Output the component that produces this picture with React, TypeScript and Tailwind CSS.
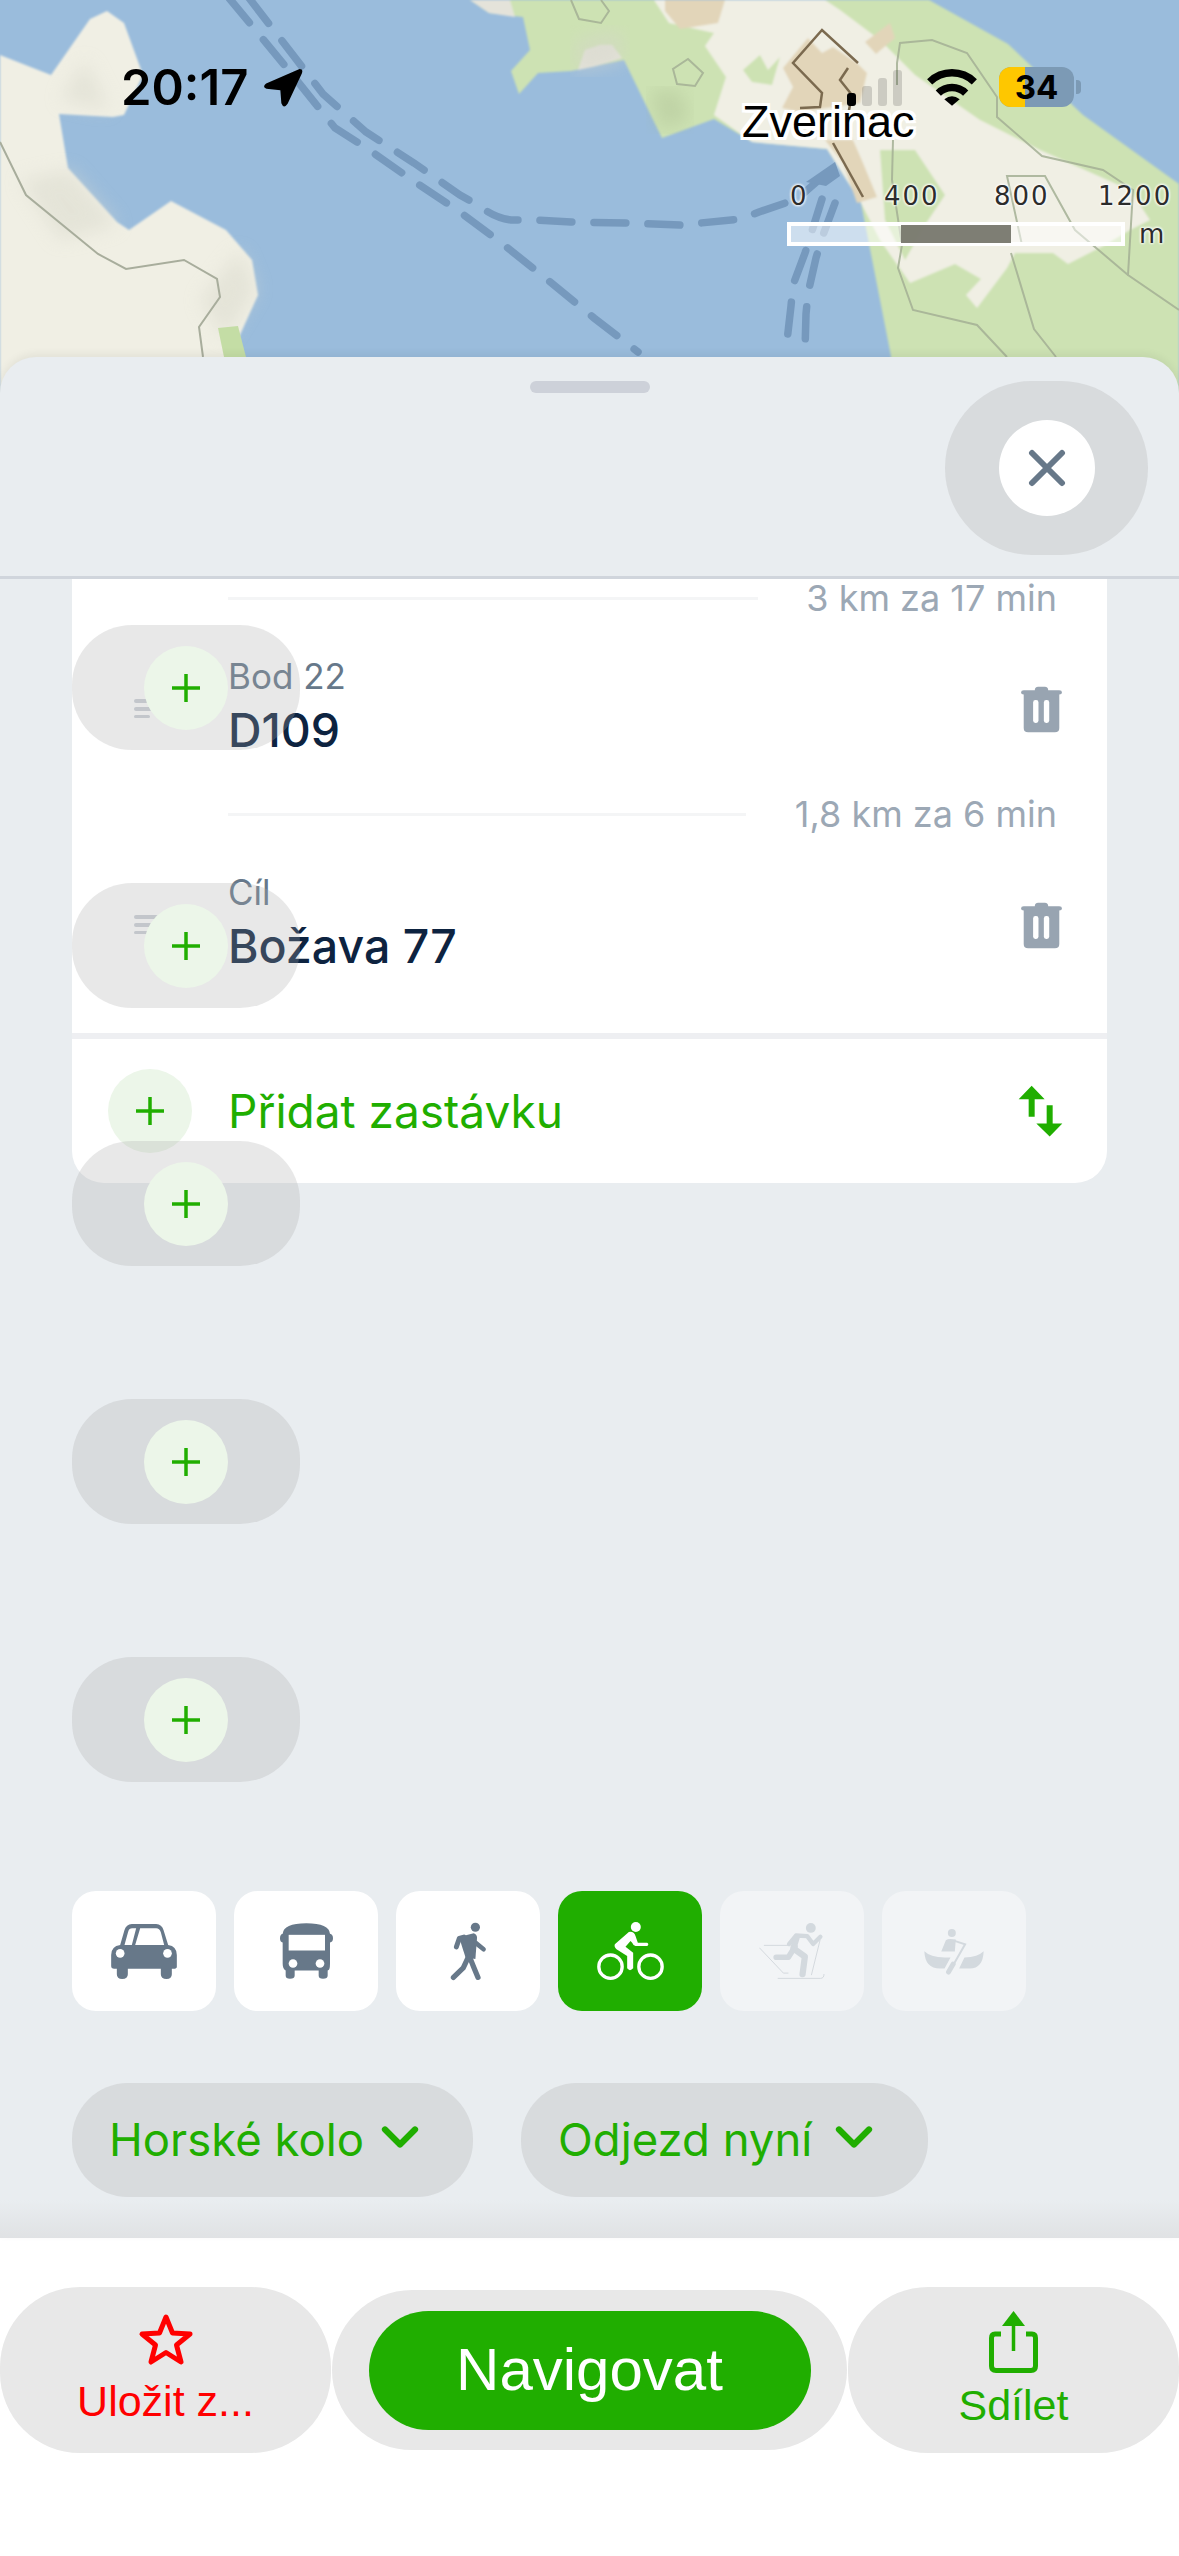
import { ChevronDown } from "lucide-react";

// ── Map background ────────────────────────────────────────────────────────────
function MapArt() {
  return (
    <svg width="1179" height="400" viewBox="0 0 1179 400" className="block">
      <defs>
        <filter id="soft">
          <feGaussianBlur stdDeviation="1" />
        </filter>
        <filter id="shade">
          <feGaussianBlur stdDeviation="9" />
        </filter>
      </defs>
      <rect width="1179" height="400" fill="#9abcdc" />

      {/* left island */}
      <g filter="url(#soft)">
        <path
          d="M0 55 L51 75 L90 19 L107 11 L124 23 L143 75 L124 115 L113 117 L59 114 L68 168 L117 222 L129 230 L171 201 L226 230 L252 260 L258 295 L239 337 L247 400 L0 400Z"
          fill="#f0efe4"
        />
      </g>
      <path d="M70 170 L118 225 L60 240 L20 180Z M225 340 L256 290 L240 250 L200 300Z M85 60 L110 110 L60 100Z" fill="#d9d9cc" filter="url(#shade)" opacity="0.5" />
      <path d="M218 328 L238 326 L246 357 L224 357Z" fill="#c4dda5" />
      <polyline points="0,142 26,195 98,254 126,269 184,260 217,279 220,297 199,327 203,357" fill="none" stroke="#a8ad9c" strokeWidth="2" />

      {/* right island */}
      <g filter="url(#soft)">
        <path
          d="M470 0 L489 13 L523 17 L530 50 L511 71 L519 94 L538 73 L571 71 L624 60 L662 138 L714 119 L752 142 L827 149 L861 203 L891 356 L891 400 L1179 400 L1179 184 L1083 115 L1008 44 L929 0Z"
          fill="#cde2b3"
        />
        <path d="M489 13 L470 0 L510 0 L515 17Z M578 70 L596 66 L622 58 L612 45 L600 45 L585 50Z" fill="#e4e3da" />
        <path
          d="M654 0 L669 23 L714 33 L705 46 L726 77 L714 115 L752 142 L827 149 L861 203 L880 240 L910 283 L955 264 L981 279 L966 295 L977 308 L1007 268 L1015 253 L1053 253 L1068 264 L1105 245 L1130 230 L1150 220 L1130 190 L1040 150 L980 120 L915 75 L880 40 L840 10 L825 0Z"
          fill="#f0efe4"
        />
        <path d="M743 70 L760 55 L768 70 L780 57 L772 85 L752 82Z M880 150 L915 150 L945 195 L925 225 L905 260 L885 220Z" fill="#cde2b3" />
        <path d="M808 38 L783 68 L793 87 L782 108 L800 112 L860 103 L867 73 L857 63 L833 47 L822 53Z M825 140 L843 163 L857 203 L877 197 L863 163 L853 140Z M665 0 L725 0 L718 23 L680 29 L665 11Z M890 23 L865 42 L876 54 L895 38Z" fill="#e2d5b9" />
      </g>
      <path d="M660 130 L690 120 L680 90 L650 90Z" fill="#a6b78c" filter="url(#shade)" opacity="0.35" />
      <path d="M625 60 L575 72 L575 40 L620 30Z" fill="#d5d5ca" filter="url(#shade)" opacity="0.5" />

      {/* contours */}
      <g fill="none" stroke="#a4b095" strokeWidth="2" opacity="0.85">
        <polyline points="897,85 897,63 900,43 932,40 967,53 997,97 997,117 1042,156 1103,170 1133,190 1128,275 1179,310" />
        <polyline points="893,140 892,180 902,245 898,268 913,310 977,325 1007,357" />
        <polyline points="1011,253 1034,329 1056,357" />
        <polyline points="1022,245 1007,176 1045,176 1075,230 1128,275" />
        <polygon points="688,59 703,73 695,86 677,84 673,69" />
        <polyline points="571,0 579,19 601,23 609,11 601,0" />
      </g>

      {/* roads */}
      <g fill="none" stroke="#7b6a4f" strokeWidth="2.5">
        <polyline points="858,63 822,30 793,63 822,93 820,107 800,108" />
        <polyline points="848,68 840,80 852,95 848,115" />
        <polyline points="833,143 863,197" />
      </g>

      {/* ferry lines */}
      <g fill="none" stroke="#7699bd" strokeWidth="7.5" strokeLinecap="round" strokeDasharray="32 22">
        <path d="M229 -2 L286 67 L335 128 L365 147 L412 180 L460 212 L504 245 L549 281 L594 318 L638 352" />
        <path d="M249 -2 L323 94 L366 132 L414 163 L460 195 L481 207 Q495 218 511 220 L534 220 L571 222 L628 223 L680 225 L741 219 L759 212 L797 199 L828 172" />
        <path d="M822 199 L805 253 L793 285 L791 306 L787 341" />
        <path d="M835 203 L823 235 L816 258 L808 293 L806 314 L805 350" />
      </g>
      <path d="M806 182 L835 162 L840 176 L826 186Z" fill="#7699bd" />

      {/* scale bar */}
      <rect x="789" y="224" width="334" height="20" fill="#ffffff" fillOpacity="0.5" stroke="#ffffff" strokeWidth="4" />
      <rect x="901" y="225" width="110" height="18" fill="#77776d" fillOpacity="0.95" />
    </svg>
  );
}

function ScaleLabel({ className, children }: { className: string; children: string }) {
  return (
    <span className={`absolute font-['DejaVu_Sans',sans-serif] text-[26px] tracking-[2px] leading-none text-[#2c2c2c] [text-shadow:0_0_3px_#fff,0_0_3px_#fff,0_0_3px_#fff] ${className}`}>
      {children}
    </span>
  );
}

// ── Status bar icons ──────────────────────────────────────────────────────────
function LocationArrow() {
  return (
    <svg width="40" height="39" viewBox="488 55 120 118" className="absolute left-[263px] top-[68px]">
      <path d="M598 58 Q610 58 605 72 L562 163 Q550 180 543 162 L540 122 L498 118 Q484 112 497 102Z" fill="#000" />
    </svg>
  );
}

function Wifi() {
  return (
    <svg width="50" height="37" viewBox="680 118 150 110" className="absolute left-[927px] top-[69px]">
      <g fill="none" stroke="#000" strokeWidth="22">
        <path d="M688 156 A 96 96 0 0 1 822 156" />
        <path d="M714 190 A 58 58 0 0 1 796 190" />
      </g>
      <path d="M732 208 Q755 190 778 208 L755 228Z" fill="#000" />
    </svg>
  );
}

function SignalBars() {
  return (
    <div className="absolute left-[847px] top-[69px] h-[37px] flex items-end gap-[6px]">
      <div className="w-[9px] h-[13px] rounded-[3px] bg-black" />
      <div className="w-[10px] h-[20px] rounded-[3px] bg-black/15" />
      <div className="w-[9px] h-[28px] rounded-[3px] bg-black/15" />
      <div className="w-[9px] h-[36px] rounded-[3px] bg-black/15" />
    </div>
  );
}

function Battery() {
  return (
    <div className="absolute left-[999px] top-[67px] flex items-center">
      <div className="w-[75px] h-[40px] rounded-[12px] overflow-hidden bg-[#7c9ab5] flex relative">
        <div className="w-[26px] bg-[#fec700]" />
        <span className="absolute inset-0 flex items-center justify-center font-bold text-[33px] leading-none text-black">34</span>
      </div>
      <div className="w-[5px] h-[14px] ml-[2px] rounded-r-[4px] bg-[#7c9ab5]" />
    </div>
  );
}

// ── Route card pieces ─────────────────────────────────────────────────────────
function PlusIcon() {
  return (
    <svg width="28" height="28" viewBox="0 0 28 28">
      <path d="M14 0 V28 M0 14 H28" stroke="#20ae00" strokeWidth="3.5" />
    </svg>
  );
}

function PlusCircle() {
  return (
    <div className="w-[84px] h-[84px] rounded-full bg-[#ecf6e9] flex items-center justify-center">
      <PlusIcon />
    </div>
  );
}

function TrashIcon() {
  return (
    <svg width="43" height="47" viewBox="62 45 126 140">
      <path
        d="M105 58 Q105 47 115 47 H135 Q145 47 145 58 H178 Q186 58 186 64 Q186 70 178 70 V170 Q178 183 165 183 H85 Q72 183 72 170 V70 Q64 70 64 64 Q64 58 72 58Z"
        fill="#98a4b1"
      />
      <rect x="100" y="87" width="16" height="68" rx="7" fill="#fff" />
      <rect x="132" y="87" width="16" height="68" rx="7" fill="#fff" />
    </svg>
  );
}

function SwapIcon() {
  return (
    <svg width="45" height="52" viewBox="55 30 135 155">
      <path d="M96 32 L135 72 H105 V125 H87 V72 H57Z M141 90 H159 V145 H188 L150 184 L110 145 H141Z" fill="#20ae00" />
    </svg>
  );
}

function Leg({ text, lineWidth }: { text: string; lineWidth: string }) {
  return (
    <div className="h-[38px] flex items-center justify-between pl-[156px] pr-[50px]">
      <div className={`h-[3px] bg-[#f4f5f6] ${lineWidth}`} />
      <span className="text-[36px] leading-none text-[#9ca8b5]">{text}</span>
    </div>
  );
}

function Stop({ label, name }: { label: string; name: string }) {
  return (
    <div className="h-[178px] flex items-start pl-[62px] pr-[44px]">
      <div className="w-[24px] mt-[82px] mr-[70px] flex flex-col gap-[4px]">
        <div className="h-[4px] w-[24px] rounded-full bg-[#ccd1d8]" />
        <div className="h-[4px] w-[24px] rounded-full bg-[#ccd1d8]" />
        <div className="h-[3px] w-[16px] rounded-full bg-[#ccd1d8]" />
      </div>
      <div className="flex-1 pt-[39px]">
        <div className="text-[35px] leading-[40px] text-[#66788a]">{label}</div>
        <div className="mt-[6px] text-[46.5px] leading-[56px] font-medium text-[#0d2340]">{name}</div>
      </div>
      <div className="mt-[69px]">
        <TrashIcon />
      </div>
    </div>
  );
}

function GhostAdd() {
  return (
    <div className="w-[228px] h-[125px] rounded-[60px] bg-[rgba(170,170,170,0.27)] flex items-center justify-center">
      <PlusCircle />
    </div>
  );
}

// ── Transport mode icons ──────────────────────────────────────────────────────
function CarIcon() {
  return (
    <svg width="66" height="55" viewBox="63 57 197 165">
      <path d="M90 120 L103 75 Q108 58 125 57 H198 Q215 58 220 75 L234 120 Q260 124 260 150 V185 Q260 191 250 191 H245 V208 Q245 222 229 222 Q212 222 212 208 V191 H113 V208 Q113 222 96 222 Q80 222 80 208 V191 H72 Q63 191 63 183 V150 Q63 124 90 120Z" fill="#677889" />
      <path d="M103 120 L114 80 Q117 70 126 70 H138 L125 120Z M135 120 L150 70 H198 Q208 70 212 82 L222 120Z" fill="#fff" />
      <circle cx="90" cy="145" r="13" fill="#fff" />
      <circle cx="232" cy="145" r="13" fill="#fff" />
    </svg>
  );
}

function BusIcon() {
  return (
    <svg width="53" height="56" viewBox="568 48 159 167">
      <path d="M576 80 Q578 48 647 48 Q716 48 718 80 Q727 82 727 93 Q727 104 718 106 V170 Q718 190 711 190 V205 Q711 215 697 215 Q684 215 684 205 V190 H612 V205 Q612 215 598 215 Q585 215 585 205 V190 Q576 185 576 170 V106 Q568 104 568 93 Q568 82 576 80Z" fill="#677889" />
      <rect x="594" y="83" width="109" height="47" fill="#fff" />
      <circle cx="607" cy="169" r="13" fill="#fff" />
      <circle cx="688" cy="169" r="13" fill="#fff" />
    </svg>
  );
}

function WalkIcon() {
  return (
    <svg width="37" height="59" viewBox="1078 42 112 180">
      <circle cx="1155" cy="58" r="14" fill="#677889" />
      <path d="M1105 88 L1150 76 Q1160 80 1160 90 L1155 155 L1125 150 Z" fill="#677889" />
      <g fill="none" stroke="#677889" strokeLinecap="round" strokeLinejoin="round">
        <path d="M1120 88 L1106 92 L1097 118" strokeWidth="15" />
        <path d="M1155 105 L1180 125" strokeWidth="14" />
        <path d="M1133 150 L1118 182 L1088 211" strokeWidth="16" />
        <path d="M1138 150 L1150 180 L1163 211" strokeWidth="16" />
      </g>
    </svg>
  );
}

function BikeIcon() {
  return (
    <svg width="67" height="58" viewBox="50 48 200 174">
      <circle cx="166" cy="63" r="15" fill="#fff" />
      <circle cx="90" cy="182" r="35" fill="none" stroke="#fff" strokeWidth="10" />
      <circle cx="210" cy="182" r="35" fill="none" stroke="#fff" strokeWidth="10" />
      <path d="M103 115 L145 78 Q160 75 165 90 L172 110 H200 Q207 114 200 120 H165 Q158 118 155 110 L150 105 L135 122 L158 140 V187 Q148 198 140 187 V150 L108 130 Q100 122 103 115Z" fill="#fff" />
    </svg>
  );
}

function SkiIcon() {
  return (
    <svg width="66" height="58" viewBox="536 46 200 174">
      <circle cx="693" cy="63" r="15" fill="#d3d9de" />
      <g fill="none" stroke="#d3d9de" strokeLinecap="round" strokeLinejoin="round">
        <path d="M627 112 L648 86 L682 88 L700 112 L722 90" strokeWidth="13" />
        <path d="M650 92 L640 125 L675 150 L668 203" strokeWidth="19" />
        <path d="M645 120 L625 152 L588 152" strokeWidth="17" />
        <path d="M721 100 L695 205" strokeWidth="3" />
        <path d="M538 124 L610 200 H624" strokeWidth="3" />
        <path d="M552 116 H625" strokeWidth="3" />
        <path d="M594 216 H722 Q733 216 733 204" strokeWidth="3" />
      </g>
    </svg>
  );
}

function CanoeIcon() {
  return (
    <svg width="60" height="47" viewBox="1032 64 181 140">
      <circle cx="1116" cy="78" r="12" fill="#d3d9de" />
      <path d="M1033 133 Q1050 150 1095 152 H1112 L1094 185 H1080 Q1035 185 1033 133Z M1212 133 Q1210 185 1170 185 H1138 L1154 152 Q1195 150 1212 133Z" fill="#d3d9de" />
      <path d="M1084 134 L1098 100 Q1105 94 1128 98 L1125 134Z" fill="#d3d9de" />
      <g fill="none" stroke="#d3d9de" strokeLinecap="round">
        <path d="M1124 102 L1156 112 L1122 172" strokeWidth="6" />
        <path d="M1120 172 L1106 196" strokeWidth="15" />
      </g>
    </svg>
  );
}

function ModeButton({ active, disabled, children }: { active?: boolean; disabled?: boolean; children: React.ReactNode }) {
  const bg = active ? "bg-[#20ae00]" : disabled ? "bg-[#f2f4f6]" : "bg-white";
  return <div className={`w-[144px] h-[120px] rounded-[24px] flex items-center justify-center ${bg}`}>{children}</div>;
}

function Dropdown({ label, width, gap }: { label: string; width: string; gap: string }) {
  return (
    <div className={`h-[114px] rounded-[56px] bg-[rgba(170,170,170,0.27)] flex items-center pl-[37px] ${width}`}>
      <span className="text-[45.5px] leading-none text-[#20ae00]">{label}</span>
      <ChevronDown size={60} strokeWidth={2.5} className={`text-[#20ae00] -mt-[6px] ${gap}`} />
    </div>
  );
}

// ── Footer icons ──────────────────────────────────────────────────────────────
function StarIcon() {
  return (
    <svg width="56" height="54" viewBox="0 0 56 54">
      <path d="M28 4 L34.5 20 L52 21 L38.5 32 L43 49 L28 39.5 L13 49 L17.5 32 L4 21 L21.5 20Z" fill="none" stroke="#ff0000" strokeWidth="5" strokeLinejoin="round" />
    </svg>
  );
}

function ShareIcon() {
  return (
    <svg width="49" height="62" viewBox="0 0 49 62">
      <path d="M24.5 0 L36 15 H13Z" fill="#20ae00" />
      <path d="M24.5 12 V40" stroke="#20ae00" strokeWidth="3.5" />
      <path d="M12 23 H6 Q2.5 23 2.5 27 V55 Q2.5 59.5 7 59.5 H42 Q46.5 59.5 46.5 55 V27 Q46.5 23 43 23 H37" fill="none" stroke="#20ae00" strokeWidth="5" />
    </svg>
  );
}

export default function App() {
  return (
    <div className="relative w-[1179px] h-[2556px] overflow-hidden bg-white font-[Inter,sans-serif]">
      {/* Map */}
      <div className="relative h-[400px]">
        <MapArt />
        <span className="absolute left-[742px] top-[97px] font-['Liberation_Sans',sans-serif] text-[45px] leading-[50px] text-black [text-shadow:3px_0_0_#fff,-3px_0_0_#fff,0_3px_0_#fff,0_-3px_0_#fff,3px_3px_0_#fff,-3px_3px_0_#fff,3px_-3px_0_#fff,-3px_-3px_0_#fff]">
          Zverinac
        </span>
        <ScaleLabel className="left-[790px] top-[183px]">0</ScaleLabel>
        <ScaleLabel className="left-[884px] top-[183px]">400</ScaleLabel>
        <ScaleLabel className="left-[994px] top-[183px]">800</ScaleLabel>
        <ScaleLabel className="left-[1098px] top-[183px]">1200</ScaleLabel>
        <ScaleLabel className="left-[1139px] top-[221px]">m</ScaleLabel>

        <span className="absolute left-[121px] top-[60px] text-[49px] leading-[56px] font-semibold text-black">20:17</span>
        <LocationArrow />
        <SignalBars />
        <Wifi />
        <Battery />
      </div>

      {/* Sheet */}
      <div className="relative -mt-[43px] h-[1881px] rounded-t-[36px] bg-[#e9edf0] flex flex-col shadow-[0_-3px_8px_rgba(0,0,0,0.06)]">
        {/* Sheet header */}
        <div className="h-[222px] shrink-0 border-b-[3px] border-[#d0d5dc] flex justify-center pt-[24px]">
          <div className="w-[120px] h-[12px] rounded-full bg-[#cdd1d9]" />
        </div>

        {/* Route card */}
        <div className="mx-[72px] bg-white rounded-b-[32px] shrink-0">
          <Leg text="3 km za 17 min" lineWidth="w-[530px]" />
          <Stop label="Bod 22" name="D109" />
          <Leg text="1,8 km za 6 min" lineWidth="w-[518px]" />
          <Stop label="Cíl" name="Božava 77" />
          <div className="h-[22px]" />
          <div className="h-[6px] bg-[#eeeff2]" />
          <div className="h-[144px] flex items-center pl-[36px] pr-[44px]">
            <PlusCircle />
            <span className="ml-[36px] flex-1 text-[46px] leading-none text-[#20ae00]">Přidat zastávku</span>
            <SwapIcon />
          </div>
        </div>

        {/* Transport modes */}
        <div className="mt-[708px] mx-[72px] flex gap-[18px] shrink-0">
          <ModeButton><CarIcon /></ModeButton>
          <ModeButton><BusIcon /></ModeButton>
          <ModeButton><WalkIcon /></ModeButton>
          <ModeButton active><BikeIcon /></ModeButton>
          <ModeButton disabled><SkiIcon /></ModeButton>
          <ModeButton disabled><CanoeIcon /></ModeButton>
        </div>

        <div className="mt-[72px] mx-[72px] flex gap-[48px] shrink-0">
          <Dropdown label="Horské kolo" width="w-[401px]" gap="ml-[6px]" />
          <Dropdown label="Odjezd nyní" width="w-[407px]" gap="ml-[12px]" />
        </div>

        <div className="mt-auto h-[38px] bg-gradient-to-b from-[#e9edf0] to-[#e0e2e4]" />

        {/* Ghost add buttons laid over the list */}
        <div className="absolute left-[72px] top-[268px] flex flex-col gap-[133px]">
          <GhostAdd />
          <GhostAdd />
          <GhostAdd />
          <GhostAdd />
          <GhostAdd />
        </div>

        {/* Close button */}
        <div className="absolute right-[31px] top-[24px] w-[203px] h-[174px] rounded-[87px] bg-[rgba(170,170,170,0.27)] flex items-center justify-center">
          <div className="w-[96px] h-[96px] rounded-full bg-white flex items-center justify-center">
            <svg width="38" height="38" viewBox="0 0 38 38">
              <path d="M4 4 L34 34 M34 4 L4 34" stroke="#677889" strokeWidth="6" strokeLinecap="round" />
            </svg>
          </div>
        </div>
      </div>

      {/* Footer */}
      <div className="h-[318px] bg-white flex items-start pt-[49px]">
        <div className="w-[331px] h-[166px] rounded-[80px] bg-[#e8e8e8] flex flex-col items-center pt-[26px] shrink-0">
          <StarIcon />
          <span className="mt-[12px] font-['Liberation_Sans',sans-serif] text-[43px] leading-[44px] text-[#ff0000]">Uložit z...</span>
        </div>
        <div className="mt-[3px] mx-[1px] w-[515px] h-[160px] rounded-[80px] bg-[#e8e8e8] flex items-center justify-center shrink-0">
          <div className="w-[442px] h-[119px] rounded-[60px] bg-[#20ae00] flex items-center justify-center">
            <span className="font-['Liberation_Sans',sans-serif] text-[60px] leading-none text-white">Navigovat</span>
          </div>
        </div>
        <div className="w-[331px] h-[166px] rounded-[80px] bg-[#e8e8e8] flex flex-col items-center pt-[24px] shrink-0">
          <ShareIcon />
          <span className="mt-[10px] font-['Liberation_Sans',sans-serif] text-[43px] leading-[44px] text-[#20ae00]">Sdílet</span>
        </div>
      </div>
    </div>
  );
}
